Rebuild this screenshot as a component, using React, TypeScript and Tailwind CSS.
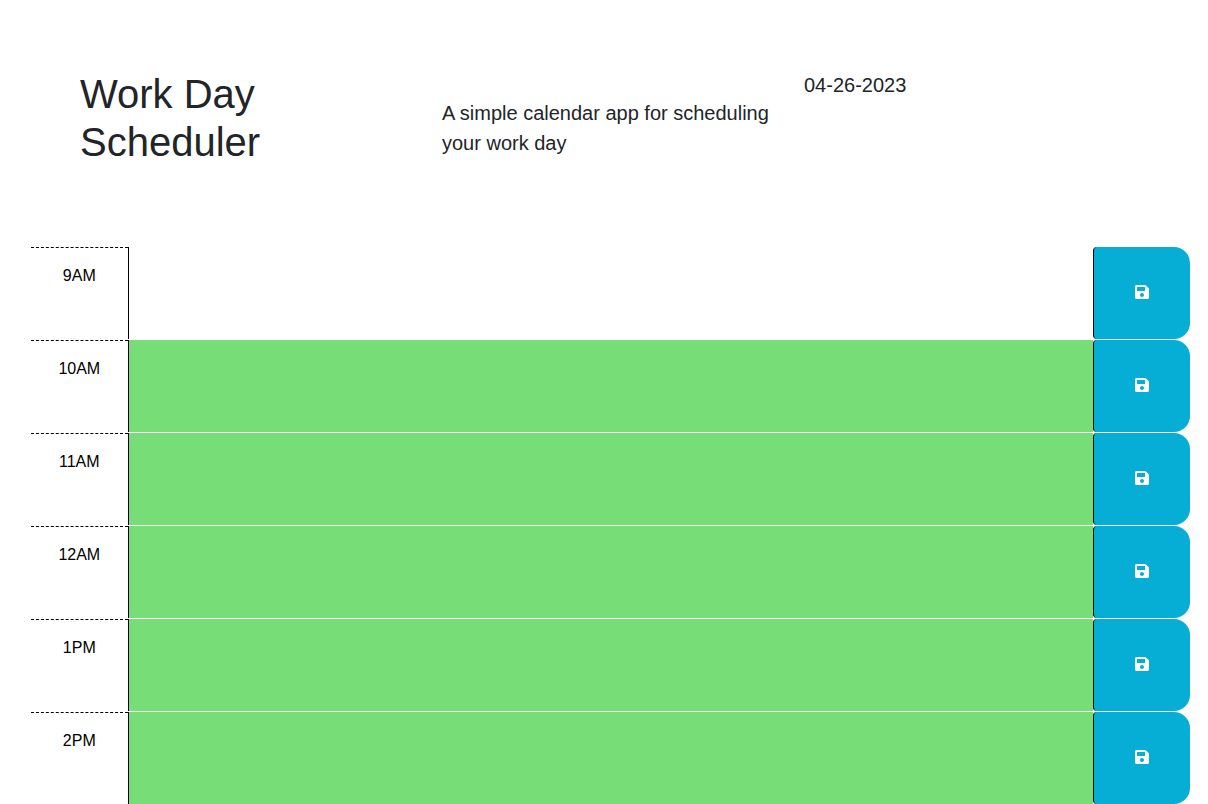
import { FaSave } from "react-icons/fa";

const hours = [
  { label: "9AM", past: true },
  { label: "10AM", past: false },
  { label: "11AM", past: false },
  { label: "12AM", past: false },
  { label: "1PM", past: false },
  { label: "2PM", past: false },
];

function TimeBlock({ label, past }: { label: string; past: boolean }) {
  const id = `event-${label}`;
  return (
    <div className="grid grid-cols-12 border-b border-white">
      <label
        htmlFor={id}
        className="border-t border-dashed border-black pt-4 text-center text-base text-black"
      >
        {label}
      </label>
      <textarea
        id={id}
        className={`col-span-10 block h-[92px] w-full resize-none border-l border-black px-3 py-2 text-base text-black outline-none ${
          past ? "bg-white" : "bg-[#77dd77]"
        }`}
      />
      <button
        type="button"
        aria-label={`Save ${label}`}
        className="flex items-center justify-center rounded-l rounded-r-2xl border-l border-black bg-[#06aed5] pb-0.5 text-base text-white hover:bg-[#0598ba]"
      >
        <FaSave aria-hidden="true" />
      </button>
    </div>
  );
}

export default function App() {
  return (
    <div className="h-screen overflow-x-hidden overflow-y-auto bg-white font-['Liberation_Sans',Arial,sans-serif] text-[#212529] [scrollbar-width:none]">
      <header className="grid grid-cols-3 pt-[70px] pr-[54px] pb-[81px] pl-[68px]">
        <h1 className="px-3 text-[40px] leading-[48px]">Work Day Scheduler</h1>
        <p className="px-3 pt-7 text-xl leading-[30px]">
          A simple calendar app for scheduling your work day
        </p>
        <p className="px-3 text-xl leading-[30px]">04-26-2023</p>
      </header>
      <main className="pr-[18px] pl-[31px]">
        {hours.map((hour) => (
          <TimeBlock key={hour.label} label={hour.label} past={hour.past} />
        ))}
      </main>
    </div>
  );
}
